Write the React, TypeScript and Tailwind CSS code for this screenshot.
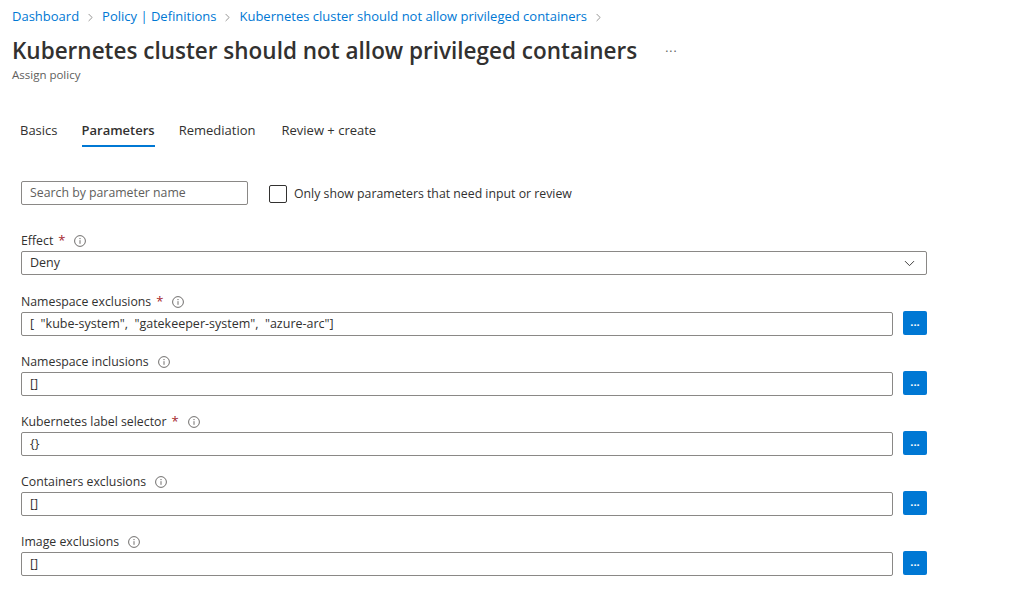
import { ChevronRight, ChevronDown } from 'lucide-react';

const font = { fontFamily: '"Segoe UI", "Open Sans", "Liberation Sans", sans-serif' };

function InfoIcon() {
  return (
    <svg width="12" height="12" viewBox="0 0 12 12" className="ml-[9px] shrink-0">
      <circle cx="6" cy="6" r="5.4" fill="none" stroke="#605e5c" strokeWidth="0.9" />
      <circle cx="6" cy="3.6" r="0.65" fill="#605e5c" />
      <path d="M6 5.2v3.6" stroke="#605e5c" strokeWidth="0.9" />
    </svg>
  );
}

function Label({ text, required }: { text: string; required?: boolean }) {
  return (
    <div className="flex items-center h-[18px] text-[12.3px] text-[#323130]">
      <span>{text}</span>
      {required && <span className="ml-[5px] text-[#a4262c] text-[13px]">*</span>}
      <InfoIcon />
    </div>
  );
}

function ParamRow({ label, value, required, first }: { label: string; value: string; required?: boolean; first?: boolean }) {
  return (
    <div className={first ? 'mt-[18px] w-[906px]' : 'mt-[17px] w-[906px]'}>
      <Label text={label} required={required} />
      <div className="mt-[1px] flex items-center gap-[10px]">
        <div className="flex-1 h-[24px] border border-[#8a8886] rounded-[2px] px-[8px] flex items-center text-[12.5px] text-[#323130] whitespace-pre">
          {value}
        </div>
        <button className="w-[24px] h-[24px] -mt-[2px] rounded-[2px] bg-[#0078d4] text-white flex items-center justify-center text-[11px] font-bold leading-none pb-[3px]">
          ...
        </button>
      </div>
    </div>
  );
}

export default function App() {
  const crumbs = ['Dashboard', 'Policy | Definitions', 'Kubernetes cluster should not allow privileged containers'];
  return (
    <div className="w-[1036px] h-[605px] bg-white overflow-hidden" style={font}>
      <div className="px-[12px] pt-[8px]">
        <nav className="flex items-center h-[18px] text-[13px] text-[#0078d4]">
          {crumbs.map((c) => (
            <span key={c} className="flex items-center">
              <span>{c}</span>
              <ChevronRight size={13} strokeWidth={1.2} className="mx-[5px] text-[#605e5c]" />
            </span>
          ))}
        </nav>
        <div className="mt-[9px] flex items-center">
          <h1 className="text-[22.5px] font-semibold text-[#323130] leading-[32px]">
            Kubernetes cluster should not allow privileged containers
          </h1>
          <span className="ml-[28px] text-[12px] text-[#605e5c] tracking-[1px] -mt-[6px]">...</span>
        </div>
        <div className="text-[11.5px] text-[#605e5c] leading-[14px] mt-[1px]">Assign policy</div>
      </div>

      <div className="mt-[39px] px-[20px] flex gap-[24px] text-[13px] text-[#323130]">
        <div className="h-[26px]">Basics</div>
        <div className="h-[26px] font-semibold border-b-2 border-[#0078d4]">Parameters</div>
        <div className="h-[26px]">Remediation</div>
        <div className="h-[26px] ml-[2px]">Review + create</div>
      </div>

      <div className="px-[21px]">
        <div className="mt-[34px] flex items-center">
          <div className="w-[227px] h-[24px] border border-[#8a8886] rounded-[2px] px-[8px] flex items-center text-[12.3px] text-[#605e5c]">
            Search by parameter name
          </div>
          <div className="ml-[21px] mt-[2px] w-[18px] h-[18px] border border-[#323130] rounded-[2px]" />
          <span className="ml-[7px] mt-[2px] text-[12.3px] text-[#323130]">Only show parameters that need input or review</span>
        </div>

        <div className="mt-[27px] w-[906px]">
          <Label text="Effect" required />
          <div className="mt-[1px] h-[24px] border border-[#8a8886] rounded-[2px] px-[8px] flex items-center justify-between text-[12.5px] text-[#323130]">
            <span>Deny</span>
            <ChevronDown size={17} strokeWidth={1.3} className="text-[#323130]" />
          </div>
        </div>

        <ParamRow first label="Namespace exclusions" required value={'[  "kube-system",  "gatekeeper-system",  "azure-arc"]'} />
        <ParamRow label="Namespace inclusions" value="[]" />
        <ParamRow label="Kubernetes label selector" required value="{}" />
        <ParamRow label="Containers exclusions" value="[]" />
        <ParamRow label="Image exclusions" value="[]" />
      </div>
    </div>
  );
}
